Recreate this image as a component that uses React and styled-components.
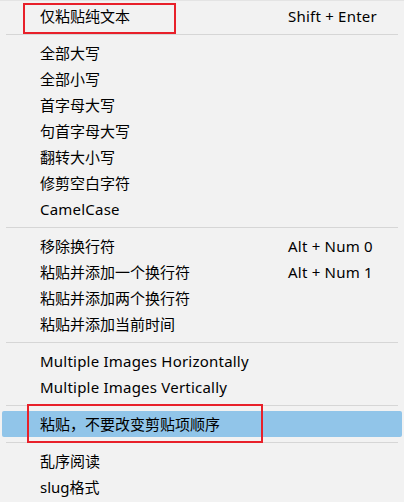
import React from "react";
import styled, { createGlobalStyle } from "styled-components";

const Global = createGlobalStyle`
  html, body { margin: 0; padding: 0; background: #f2f2f2; }
  body { font-family: "Noto Sans", "Noto Sans CJK SC", sans-serif; }
`;

const Menu = styled.div`
  width: 404px;
  height: 502px;
  box-sizing: border-box;
  background: #f2f2f2;
  border-top: 1px solid #e4e4e4;
  padding-top: 2px;
  display: flex;
  flex-direction: column;
  overflow: hidden;
`;

const Row = styled.div`
  position: relative;
  height: 26px;
  margin: 0 2px 0 2px;
  display: grid;
  grid-template-columns: 248px 1fr;
  align-items: center;
  padding-left: 38px;
  font-size: 15px;
  color: #000;
  white-space: nowrap;
  background: ${(p) => (p.$active ? "#91c5e9" : "transparent")};
  border-radius: ${(p) => (p.$active ? "2px" : "0")};
`;

const Label = styled.span`
  line-height: 26px;
  letter-spacing: ${(p) => (p.$latin ? "0.22px" : "0")};
`;

const Shortcut = styled.span`
  line-height: 26px;
  letter-spacing: 0.22px;
`;

const Separator = styled.div`
  height: 1px;
  margin: 5px 6px 5px 6px;
  background: #d6d6d6;
`;

const Mark = styled.div`
  position: absolute;
  left: ${(p) => p.$left}px;
  top: ${(p) => p.$top}px;
  width: ${(p) => p.$width}px;
  height: ${(p) => p.$height}px;
  box-sizing: border-box;
  border: 2px solid #e8202a;
  pointer-events: none;
`;

const groups = [
  [{ label: "仅粘贴纯文本", shortcut: "Shift + Enter", mark: { left: 21, top: 0, width: 153, height: 31 } }],
  [
    { label: "全部大写" },
    { label: "全部小写" },
    { label: "首字母大写" },
    { label: "句首字母大写" },
    { label: "翻转大小写" },
    { label: "修剪空白字符" },
    { label: "CamelCase", latin: true },
  ],
  [
    { label: "移除换行符", shortcut: "Alt + Num 0" },
    { label: "粘贴并添加一个换行符", shortcut: "Alt + Num 1" },
    { label: "粘贴并添加两个换行符" },
    { label: "粘贴并添加当前时间" },
  ],
  [
    { label: "Multiple Images Horizontally", latin: true },
    { label: "Multiple Images Vertically", latin: true },
  ],
  [
    {
      label: "粘贴，不要改变剪贴项顺序",
      active: true,
      mark: { left: 25, top: -7, width: 236, height: 39 },
    },
  ],
  [{ label: "乱序阅读" }, { label: "slug格式" }],
];

export default function App() {
  return (
    <>
      <Global />
      <Menu>
        {groups.map((g, gi) => (
          <React.Fragment key={gi}>
            {gi > 0 && <Separator />}
            {g.map((it, i) => (
              <Row key={i} $active={it.active}>
                <Label $latin={it.latin}>{it.label}</Label>
                {it.shortcut ? <Shortcut>{it.shortcut}</Shortcut> : <span />}
                {it.mark && (
                  <Mark
                    $left={it.mark.left}
                    $top={it.mark.top}
                    $width={it.mark.width}
                    $height={it.mark.height}
                  />
                )}
              </Row>
            ))}
          </React.Fragment>
        ))}
      </Menu>
    </>
  );
}
